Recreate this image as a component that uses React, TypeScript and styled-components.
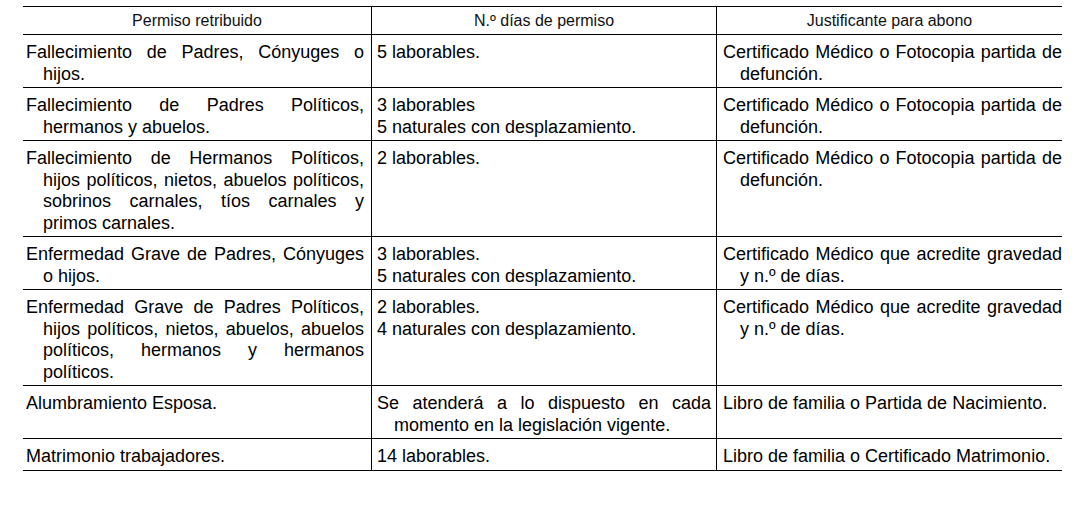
import React from "react";
import styled, { createGlobalStyle } from "styled-components";

type Row = {
  permiso: string;
  dias: string[];
  justificante: string;
};

const rows: Row[] = [
  {
    permiso: "Fallecimiento de Padres, Cónyuges o hijos.",
    dias: ["5 laborables."],
    justificante: "Certificado Médico o Fotocopia partida de defunción.",
  },
  {
    permiso: "Fallecimiento de Padres Políticos, hermanos y abuelos.",
    dias: ["3 laborables", "5 naturales con desplazamiento."],
    justificante: "Certificado Médico o Fotocopia partida de defunción.",
  },
  {
    permiso:
      "Fallecimiento de Hermanos Políticos, hijos políticos, nietos, abuelos políticos, sobrinos carnales, tíos carnales y primos carnales.",
    dias: ["2 laborables."],
    justificante: "Certificado Médico o Fotocopia partida de defunción.",
  },
  {
    permiso: "Enfermedad Grave de Padres, Cónyuges o hijos.",
    dias: ["3 laborables.", "5 naturales con desplazamiento."],
    justificante: "Certificado Médico que acredite gravedad y n.º de días.",
  },
  {
    permiso:
      "Enfermedad Grave de Padres Políticos, hijos políticos, nietos, abuelos, abuelos políticos, hermanos y hermanos políticos.",
    dias: ["2 laborables.", "4 naturales con desplazamiento."],
    justificante: "Certificado Médico que acredite gravedad y n.º de días.",
  },
  {
    permiso: "Alumbramiento Esposa.",
    dias: ["Se atenderá a lo dispuesto en cada momento en la legislación vigente."],
    justificante: "Libro de familia o Partida de Nacimiento.",
  },
  {
    permiso: "Matrimonio trabajadores.",
    dias: ["14 laborables."],
    justificante: "Libro de familia o Certificado Matrimonio.",
  },
];

const headers = ["Permiso retribuido", "N.º días de permiso", "Justificante para abono"];

export default function App() {
  return (
    <>
      <GlobalStyle />
      <Table>
        {headers.map((h, i) => (
          <HeaderCell key={h} $col={i}>
            {h}
          </HeaderCell>
        ))}
        {rows.map((row) => (
          <React.Fragment key={row.permiso}>
            <Cell $col={0}>
              <Para>{row.permiso}</Para>
            </Cell>
            <Cell $col={1}>
              {row.dias.map((d) => (
                <Para key={d}>{d}</Para>
              ))}
            </Cell>
            <Cell $col={2}>
              <Para>{row.justificante}</Para>
            </Cell>
          </React.Fragment>
        ))}
      </Table>
    </>
  );
}

const GlobalStyle = createGlobalStyle`
  body {
    margin: 0;
    background: #fff;
    color: #000;
    font-family: "Liberation Sans", Arial, sans-serif;
  }
`;

const Table = styled.div`
  display: grid;
  grid-template-columns: 348px 345px 346px;
  width: max-content;
  margin: 6px 0 0 23px;
  border-top: 1px solid #000;
`;

const HeaderCell = styled.div<{ $col: number }>`
  box-sizing: border-box;
  height: 28px;
  line-height: 27px;
  font-size: 16px;
  text-align: center;
  color: #111;
  border-bottom: 1px solid #000;
  border-left: ${(p) => (p.$col > 0 ? "1px solid #000" : "none")};
`;

const cellPadding = ["7px 7px 2px 20px", "7px 5px 2px 22px", "7px 0 2px 23px"];

const Cell = styled.div<{ $col: number }>`
  box-sizing: border-box;
  padding: ${(p) => cellPadding[p.$col]};
  font-size: 18px;
  line-height: 21.5px;
  border-bottom: 1px solid #000;
  border-left: ${(p) => (p.$col > 0 ? "1px solid #000" : "none")};
`;

const Para = styled.p`
  margin: 0;
  text-align: justify;
  text-justify: inter-character;
  text-indent: -17px;
`;
